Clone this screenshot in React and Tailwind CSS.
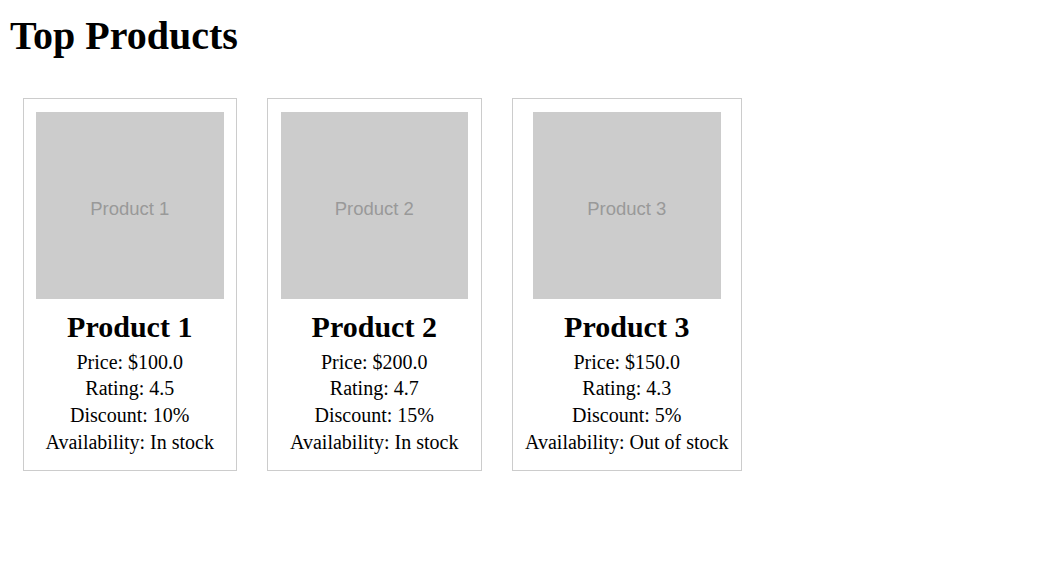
const products = [
  { id: 1, name: 'Product 1', price: '100.0', rating: '4.5', discount: '10%', availability: 'In stock' },
  { id: 2, name: 'Product 2', price: '200.0', rating: '4.7', discount: '15%', availability: 'In stock' },
  { id: 3, name: 'Product 3', price: '150.0', rating: '4.3', discount: '5%', availability: 'Out of stock' },
];

function ProductCard({ product }) {
  return (
    <div className="border border-[#cccccc] px-[12.5px] pt-[13px] pb-[12.5px] text-center">
      {/* placeholder image */}
      <div className="mx-auto flex h-[187px] w-[187.5px] items-center justify-center bg-[#cccccc] pt-[6px] font-['Liberation_Sans',Arial,sans-serif] text-[18.5px] text-[#999999]">
        {product.name}
      </div>
      <h2 className="mt-[11px] mb-[6.25px] text-[30px] font-bold leading-[34.5px]">{product.name}</h2>
      <div className="mb-[3.75px] flex flex-col gap-[3.75px] text-[20px] leading-[23px]">
        <p>Price: ${product.price}</p>
        <p>Rating: {product.rating}</p>
        <p>Discount: {product.discount}</p>
        <p className="whitespace-nowrap">Availability: {product.availability}</p>
      </div>
    </div>
  );
}

export default function App() {
  return (
    <div className="min-h-screen bg-white px-[10px] pt-[12.7px] font-['Liberation_Serif','Times_New_Roman',serif] text-black">
      <h1 className="text-[40px] font-bold leading-[46px]">Top Products</h1>
      <div className="mt-[39.3px] ml-[12.5px] flex items-start gap-[30px]">
        {products.map(p => (
          <ProductCard key={p.id} product={p} />
        ))}
      </div>
    </div>
  );
}
